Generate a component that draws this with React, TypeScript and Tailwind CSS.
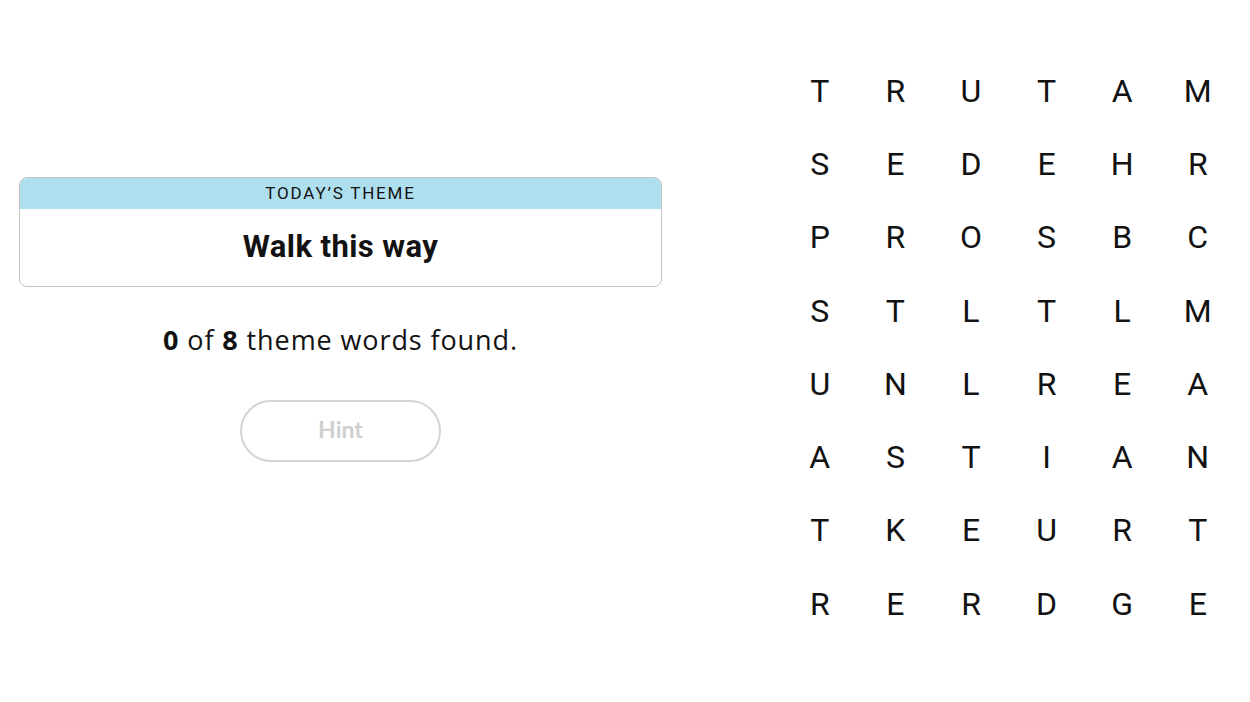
const rows = [
  'TRUTAM',
  'SEDEHR',
  'PROSBC',
  'STLTLM',
  'UNLREA',
  'ASTIAN',
  'TKEURT',
  'RERDGE',
];

function ThemeCard() {
  return (
    <div className="w-[643px] rounded-lg border border-[#c4c4c4] overflow-hidden bg-white">
      <div className="h-[31px] bg-[#aedfee] flex items-center justify-center">
        <span className="text-[17px] tracking-[1.8px] text-[#121212] font-['Roboto',sans-serif] font-normal">
          TODAY’S THEME
        </span>
      </div>
      <div className="h-[77px] flex items-center justify-center pb-[1px]">
        <h2 className="text-[31px] font-bold text-[#121212] font-['Roboto',sans-serif] tracking-[0.4px]">
          Walk this way
        </h2>
      </div>
    </div>
  );
}

function LetterGrid() {
  return (
    <div className="grid grid-cols-[repeat(6,75.6px)] auto-rows-[73.3px]">
      {rows.map((row, r) =>
        row.split('').map((ch, c) => (
          <div
            key={`${r}-${c}`}
            className="flex items-center justify-center text-[32px] text-[#121212] font-['Roboto',sans-serif] font-normal"
          >
            {ch}
          </div>
        )),
      )}
    </div>
  );
}

export default function App() {
  return (
    <div className="w-[1250px] h-[702px] bg-white flex">
      <div className="w-[700px] pl-[19px] pt-[177px] flex flex-col items-start">
        <ThemeCard />
        <div className="w-[643px] flex flex-col items-center">
          <p className="mt-[36px] text-[27px] tracking-[0.9px] text-[#121212] font-['Open_Sans',sans-serif] leading-[34px]">
            <span className="font-bold">0</span> of <span className="font-bold">8</span> theme words found.
          </p>
          <button
            type="button"
            disabled
            className="mt-[43px] w-[201px] h-[62px] rounded-full border-2 border-[#d4d4d4] text-[#cfcfcf] text-[23px] font-bold font-['Lato',sans-serif] bg-white pb-[3px]"
          >
            Hint
          </button>
        </div>
      </div>
      <div className="pl-[82px] pt-[54px]">
        <LetterGrid />
      </div>
    </div>
  );
}
